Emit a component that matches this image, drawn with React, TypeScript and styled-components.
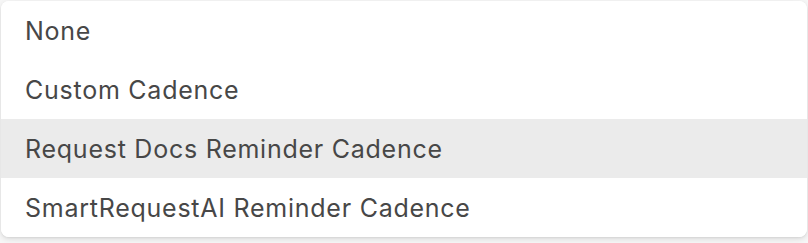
import React from "react"
import styled, { createGlobalStyle } from "styled-components"

const GlobalStyle = createGlobalStyle`
    html, body {
        margin: 0;
        padding: 0;
        background: #ffffff;
    }
`;

const Page = styled.div`
    padding: 1px 1px 6px 1px;
    width: 808px;
    height: 243px;
    box-sizing: border-box;
    background: #f7f7f7;
`;

const Menu = styled.ul`
    list-style: none;
    margin: 0;
    padding: 0;
    background: #ffffff;
    border-radius: 8px;
    box-shadow: 0 2px 6px rgba(0, 0, 0, 0.12), 0 1px 2px rgba(0, 0, 0, 0.06);
    overflow: hidden;
`;

const Option = styled.li<{ $active?: boolean }>`
    display: flex;
    align-items: center;
    height: 59px;
    padding: 0 24px;
    font-family: Inter, "Noto Sans", sans-serif;
    font-size: 25px;
    letter-spacing: 0.75px;
    color: #474747;
    background: ${p => (p.$active ? "#ebebeb" : "#ffffff")};
    cursor: pointer;
`;

const options = [
    "None",
    "Custom Cadence",
    "Request Docs Reminder Cadence",
    "SmartRequestAI Reminder Cadence",
];

const App = () => {
    return (
        <>
            <GlobalStyle />
            <Page>
                <Menu>
                    {options.map(label => (
                        <Option key={label} $active={label === "Request Docs Reminder Cadence"}>
                            {label}
                        </Option>
                    ))}
                </Menu>
            </Page>
        </>
    )
}

export default App;
